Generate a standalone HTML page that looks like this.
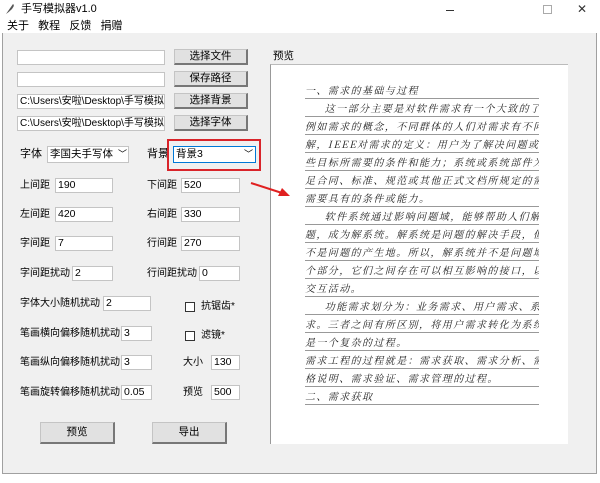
<!DOCTYPE html>
<html><head><meta charset="utf-8"><style>
*{margin:0;padding:0;box-sizing:border-box}
body{width:600px;height:483px;background:#fff;font-family:"Liberation Sans","Noto Sans CJK SC",sans-serif;font-size:11px;color:#000;position:relative;overflow:hidden}
.a{position:absolute}
.win{left:2px;top:33px;width:595px;height:441px;background:#f0f0f0;border:1px solid #a0a0a0;border-top:none}
.inp{position:absolute;background:#fff;border:1px solid #c4c4c4;height:15px;font-size:10.5px;line-height:13px;padding-left:2px;white-space:nowrap;overflow:hidden}
.btn{position:absolute;background:#e1e1e1;border:1px solid #c4c4c4;border-right:2px solid #777;border-bottom:2px solid #777;font-size:10.5px;text-align:center;line-height:13px}
.lbl{position:absolute;font-size:10px;line-height:15px;white-space:nowrap}
.pv{position:absolute;left:270px;top:64px;width:298px;height:380px;background:#fff;border-left:1px solid #999;border-top:1px solid #bbb}
.ln{position:absolute;left:34px;width:234px;border-bottom:1px solid #999;font-family:"Noto Serif CJK SC",serif;font-style:italic;font-size:10px;color:#222;white-space:nowrap;letter-spacing:1.4px;height:17px;line-height:15px;overflow:hidden}
</style></head><body>
<svg class="a" style="left:4px;top:3px" width="12" height="12" viewBox="0 0 12 12"><path d="M2 11 L9 1 Q11 2 8 6 Q5 9 2 11Z" fill="#555"/></svg>
<div class="lbl" style="left:21px;top:2px;font-size:11px">手写模拟器v1.0</div>
<div class="a" style="left:446px;top:10px;width:8px;border-top:1px solid #333"></div>
<div class="a" style="left:543px;top:5px;width:9px;height:9px;border:1px solid #aaa"></div>
<div class="lbl" style="left:577px;top:2px;font-size:12px;color:#333">✕</div>
<div class="lbl" style="left:7px;top:19px;font-size:11px">关于&nbsp;&nbsp;&nbsp;教程&nbsp;&nbsp;&nbsp;反馈&nbsp;&nbsp;&nbsp;捐赠</div>
<div class="a win"></div>

<div class="inp" style="left:17px;top:50px;width:148px"></div>
<div class="inp" style="left:17px;top:72px;width:148px"></div>
<div class="inp" style="left:17px;top:94px;width:148px;font-size:10px">C:\Users\安啦\Desktop\手写模拟器</div>
<div class="inp" style="left:17px;top:116px;width:148px;font-size:10px">C:\Users\安啦\Desktop\手写模拟器</div>
<div class="btn" style="left:174px;top:49px;width:74px;height:16px">选择文件</div>
<div class="btn" style="left:174px;top:71px;width:74px;height:16px">保存路径</div>
<div class="btn" style="left:174px;top:93px;width:74px;height:16px">选择背景</div>
<div class="btn" style="left:174px;top:115px;width:74px;height:16px">选择字体</div>
<div class="lbl" style="left:273px;top:49px;font-size:10.5px">预览</div>

<div class="lbl" style="left:20px;top:147px;font-size:11px">字体</div>
<div class="inp" style="left:47px;top:146px;width:82px;height:17px;line-height:15px;font-size:10.5px">李国夫手写体<span class="a" style="left:70px;top:0;font-size:9px">﹀</span></div>
<div class="lbl" style="left:147px;top:147px;font-size:11px">背景</div>
<div class="a" style="left:167px;top:139px;width:94px;height:32px;border:2px solid #d9242a"></div>
<div class="inp" style="left:173px;top:146px;width:83px;height:17px;line-height:15px;font-size:10.5px;border-color:#0078d7">背景3<span class="a" style="left:70px;top:0;font-size:9px">﹀</span></div>

<div class="lbl" style="left:20px;top:178px">上间距</div><div class="inp" style="left:55px;top:178px;width:58px">190</div>
<div class="lbl" style="left:147px;top:178px">下间距</div><div class="inp" style="left:181px;top:178px;width:59px">520</div>
<div class="lbl" style="left:20px;top:207px">左间距</div><div class="inp" style="left:55px;top:207px;width:58px">420</div>
<div class="lbl" style="left:147px;top:207px">右间距</div><div class="inp" style="left:181px;top:207px;width:59px">330</div>
<div class="lbl" style="left:20px;top:236px">字间距</div><div class="inp" style="left:55px;top:236px;width:58px">7</div>
<div class="lbl" style="left:147px;top:236px">行间距</div><div class="inp" style="left:181px;top:236px;width:59px">270</div>
<div class="lbl" style="left:20px;top:266px">字间距扰动</div><div class="inp" style="left:72px;top:266px;width:41px">2</div>
<div class="lbl" style="left:147px;top:266px">行间距扰动</div><div class="inp" style="left:199px;top:266px;width:41px">0</div>
<div class="lbl" style="left:20px;top:296px">字体大小随机扰动</div><div class="inp" style="left:103px;top:296px;width:48px">2</div>
<div class="a" style="left:185px;top:302px;width:10px;height:10px;border:1px solid #333;background:#fff"></div><div class="lbl" style="left:201px;top:299px">抗锯齿*</div>
<div class="lbl" style="left:20px;top:326px">笔画横向偏移随机扰动</div><div class="inp" style="left:121px;top:326px;width:31px">3</div>
<div class="a" style="left:185px;top:331px;width:10px;height:10px;border:1px solid #333;background:#fff"></div><div class="lbl" style="left:201px;top:328px">滤镜*</div>
<div class="lbl" style="left:20px;top:355px">笔画纵向偏移随机扰动</div><div class="inp" style="left:121px;top:355px;width:31px">3</div>
<div class="lbl" style="left:183px;top:355px">大小</div><div class="inp" style="left:211px;top:355px;width:29px">130</div>
<div class="lbl" style="left:20px;top:385px">笔画旋转偏移随机扰动</div><div class="inp" style="left:121px;top:385px;width:31px">0.05</div>
<div class="lbl" style="left:183px;top:385px">预览</div><div class="inp" style="left:211px;top:385px;width:29px">500</div>

<div class="btn" style="left:40px;top:422px;width:75px;height:22px;line-height:19px">预览</div>
<div class="btn" style="left:152px;top:422px;width:75px;height:22px;line-height:19px">导出</div>

<div class="pv">
<div class="ln" style="top:17px">一、需求的基础与过程</div>
<div class="ln" style="top:35px">&nbsp;&nbsp;&nbsp;&nbsp;&nbsp;这一部分主要是对软件需求有一个大致的了解，</div>
<div class="ln" style="top:53px">例如需求的概念，不同群体的人们对需求有不同的理</div>
<div class="ln" style="top:71px">解，IEEE对需求的定义：用户为了解决问题或达到某</div>
<div class="ln" style="top:89px">些目标所需要的条件和能力；系统或系统部件为了满</div>
<div class="ln" style="top:107px">足合同、标准、规范或其他正式文档所规定的需求所</div>
<div class="ln" style="top:125px">需要具有的条件或能力。</div>
<div class="ln" style="top:143px">&nbsp;&nbsp;&nbsp;&nbsp;&nbsp;软件系统通过影响问题域，能够帮助人们解决问</div>
<div class="ln" style="top:161px">题，成为解系统。解系统是问题的解决手段，但是并</div>
<div class="ln" style="top:179px">不是问题的产生地。所以，解系统并不是问题域的一</div>
<div class="ln" style="top:197px">个部分，它们之间存在可以相互影响的接口，以实现</div>
<div class="ln" style="top:215px">交互活动。</div>
<div class="ln" style="top:233px">&nbsp;&nbsp;&nbsp;&nbsp;&nbsp;功能需求划分为：业务需求、用户需求、系统需</div>
<div class="ln" style="top:251px">求。三者之间有所区别，将用户需求转化为系统需求</div>
<div class="ln" style="top:269px">是一个复杂的过程。</div>
<div class="ln" style="top:287px">需求工程的过程就是：需求获取、需求分析、需求规</div>
<div class="ln" style="top:305px">格说明、需求验证、需求管理的过程。</div>
<div class="ln" style="top:323px">二、需求获取</div>
</div>
<svg class="a" style="left:248px;top:180px;z-index:5" width="45" height="20"><line x1="3" y1="3" x2="34" y2="13" stroke="#e02020" stroke-width="2"/><polygon points="42,16 30,16 34,8" fill="#e02020"/></svg>
</body></html>
